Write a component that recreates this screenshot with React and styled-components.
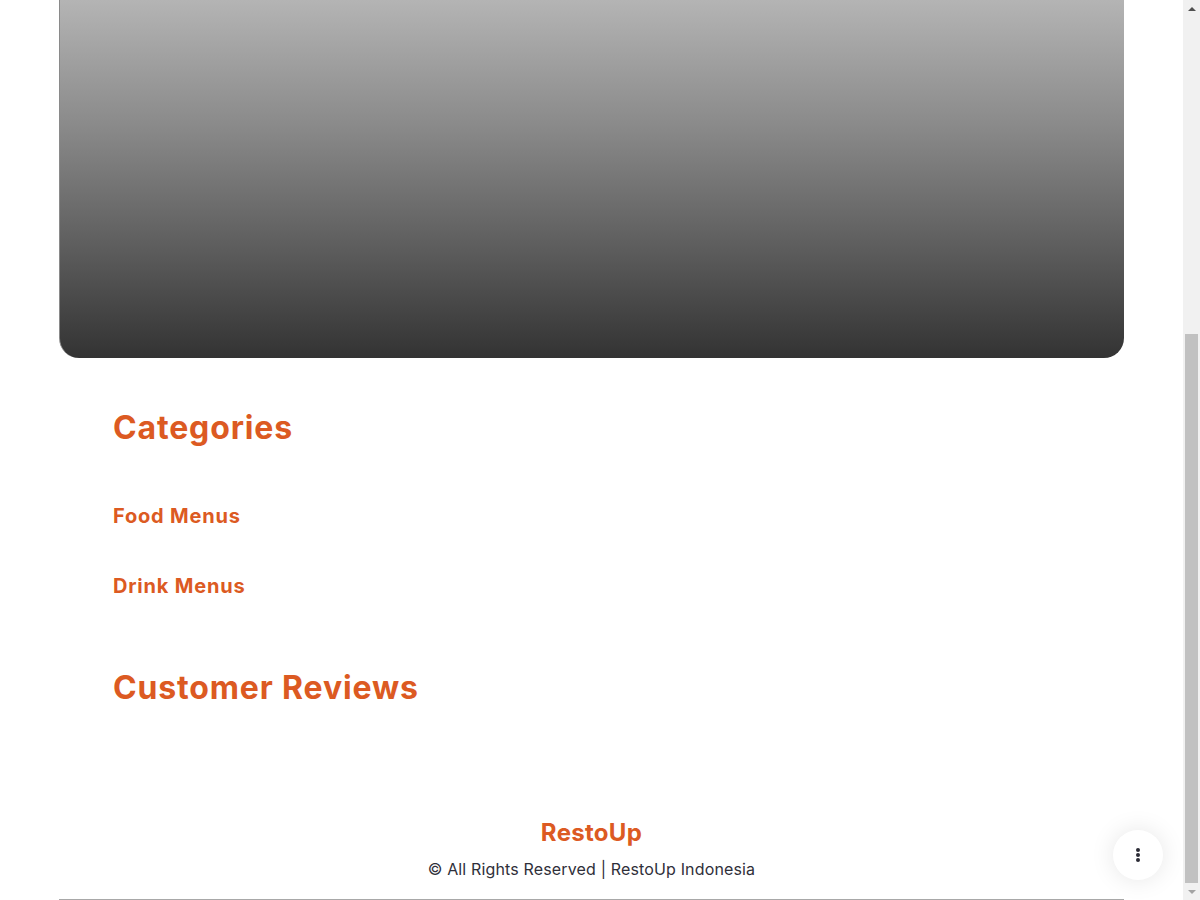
import React from 'react';
import styled, { createGlobalStyle } from 'styled-components';

const GlobalStyle = createGlobalStyle`
  html, body {
    margin: 0;
    padding: 0;
    height: 900px;
    overflow: hidden;
    background: #fff;
  }
  body {
    font-family: Inter, "Noto Sans", sans-serif;
  }
`

const Page = styled.div`
  display: flex;
  height: 900px;
`

const Main = styled.main`
  flex: 1;
  display: flex;
  flex-direction: column;
  min-width: 0;
`

const Hero = styled.div`
  margin: 0 59px;
  height: 358px;
  flex-shrink: 0;
  border-radius: 0 0 20px 20px;
  border-left: 1px solid #8a8a8a;
  box-sizing: border-box;
  background: linear-gradient(180deg, #b4b4b4 0%, #8a8a8a 35%, #5c5c5c 70%, #333333 100%);
`

const Content = styled.section`
  padding: 0 113px;
  flex: 1;
`

const SectionTitle = styled.h2`
  margin: ${p => p.$top}px 0 0;
  font-size: 32px;
  line-height: 40px;
  font-weight: 700;
  letter-spacing: 0.85px;
  color: #dc5a22;
`

const CategoryLink = styled.h3`
  margin: ${p => p.$top}px 0 0;
  font-size: 20px;
  line-height: 26px;
  font-weight: 700;
  letter-spacing: 0.8px;
  color: #dc5a22;
`

const Footer = styled.footer`
  margin: 0 59px;
  padding-bottom: 20px;
  border-bottom: 1px solid #a8a8a8;
  text-align: center;
`

const Brand = styled.div`
  font-size: 24px;
  line-height: 30px;
  font-weight: 700;
  letter-spacing: 0.3px;
  color: #dc5a22;
`

const Copyright = styled.p`
  margin: 11px 0 0;
  font-size: 16px;
  line-height: 20px;
  letter-spacing: 0.15px;
  color: #2f2f3a;
`

const Scrollbar = styled.div`
  width: 17px;
  flex-shrink: 0;
  background: #f1f1f1;
  display: flex;
  flex-direction: column;
`

const Arrow = styled.div`
  height: 17px;
  display: flex;
  align-items: center;
  justify-content: center;
`

const Track = styled.div`
  flex: 1;
  display: flex;
  flex-direction: column;
  padding: 0 2px;
`

const Thumb = styled.div`
  margin-top: 317px;
  flex: 1;
  background: #c1c1c1;
`

const Fab = styled.button`
  position: fixed;
  right: 37px;
  bottom: 20px;
  width: 50px;
  height: 50px;
  border: none;
  border-radius: 50%;
  background: #fff;
  box-shadow: 0 0 24px rgba(0, 0, 0, 0.1);
  display: flex;
  align-items: center;
  justify-content: center;
  padding: 0;
`

const Dots = () => (
  <svg width="4" height="14" viewBox="0 0 4 14">
    <circle cx="2" cy="2" r="2" fill="#2b2b35" />
    <circle cx="2" cy="7" r="2" fill="#2b2b35" />
    <circle cx="2" cy="12" r="2" fill="#2b2b35" />
  </svg>
)

const App = () => {
  return (
    <Page>
      <GlobalStyle />
      <Main>
        <Hero />
        <Content>
          <SectionTitle $top={50}>Categories</SectionTitle>
          <CategoryLink $top={55}>Food Menus</CategoryLink>
          <CategoryLink $top={44}>Drink Menus</CategoryLink>
          <SectionTitle $top={69}>Customer Reviews</SectionTitle>
        </Content>
        <Footer>
          <Brand>RestoUp</Brand>
          <Copyright>© All Rights Reserved | RestoUp Indonesia</Copyright>
        </Footer>
      </Main>
      <Scrollbar>
        <Arrow>
          <svg width="8" height="4" viewBox="0 0 8 4"><path d="M0 4 L4 0 L8 4 Z" fill="#505050" /></svg>
        </Arrow>
        <Track>
          <Thumb />
        </Track>
        <Arrow>
          <svg width="8" height="4" viewBox="0 0 8 4"><path d="M0 0 L4 4 L8 0 Z" fill="#a3a3a3" /></svg>
        </Arrow>
      </Scrollbar>
      <Fab aria-label="menu">
        <Dots />
      </Fab>
    </Page>
  )
}

export default App;
